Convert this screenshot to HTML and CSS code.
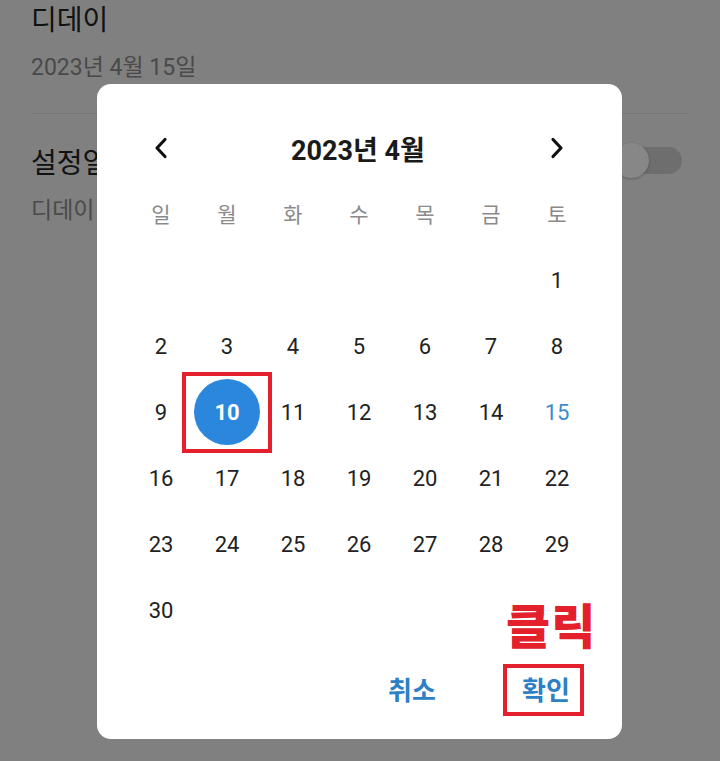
FILE: index.html
```html
<!DOCTYPE html>
<html lang="ko">
<head>
    <meta charset="UTF-8">
    <meta name="viewport" content="width=device-width, initial-scale=1.0">
    <title>디데이 설정</title>
    <link rel="stylesheet" href="styles.css">
</head>
<body>
    <!-- Settings list behind the dialog -->
    <div class="settings">
        <div class="item">
            <div class="itemText">
                <h3>디데이</h3>
                <p>2023년 4월 15일</p>
            </div>
        </div>
        <div class="item">
            <div class="itemText">
                <h3>설정일을 1일로</h3>
                <p>디데이 시작일을 1일로 계산합니다</p>
            </div>
            <div class="switch"><span class="thumb"></span></div>
        </div>
    </div>

    <div class="overlay">
        <div class="dialog">
            <div class="calHeader">
                <button class="navBtn" aria-label="이전 달">
                    <svg width="14" height="22" viewBox="0 0 14 22"><path d="M11 2.5 L3 11 L11 19.5" fill="none" stroke="#111" stroke-width="3.2" stroke-linecap="round" stroke-linejoin="round"/></svg>
                </button>
                <h2>2023년 4월</h2>
                <button class="navBtn" aria-label="다음 달">
                    <svg width="14" height="22" viewBox="0 0 14 22"><path d="M3 2.5 L11 11 L3 19.5" fill="none" stroke="#111" stroke-width="3.2" stroke-linecap="round" stroke-linejoin="round"/></svg>
                </button>
            </div>

            <div class="weekdays">
                <span>일</span><span>월</span><span>화</span><span>수</span><span>목</span><span>금</span><span>토</span>
            </div>

            <div class="days">
                <span></span><span></span><span></span><span></span><span></span><span></span><span>1</span>
                <span>2</span><span>3</span><span>4</span><span>5</span><span>6</span><span>7</span><span>8</span>
                <span>9</span><span class="selected"><b>10</b><i class="mark"></i></span><span>11</span><span>12</span><span>13</span><span>14</span><span class="today">15</span>
                <span>16</span><span>17</span><span>18</span><span>19</span><span>20</span><span>21</span><span>22</span>
                <span>23</span><span>24</span><span>25</span><span>26</span><span>27</span><span>28</span><span>29</span>
                <span>30</span>
            </div>

            <div class="actions">
                <button class="textBtn">취소</button>
                <button class="textBtn okBtn">확인<i class="mark"></i><em class="note">클릭</em></button>
            </div>
        </div>
    </div>
</body>
</html>
```

FILE: styles.css
```css
/* Reset */
*, *:before, *:after {
    box-sizing: border-box;
}
html, body, h2, h3, p {
    margin: 0;
    padding: 0;
}
body {
    width: 720px;
    height: 761px;
    overflow: hidden;
    background-color: #f2f2f2;
    font-family: Roboto, "Noto Sans CJK KR", sans-serif;
    color: #222;
}
button {
    border: none;
    background: none;
    padding: 0;
    font: inherit;
    cursor: pointer;
}

/* Settings list */
.settings {
    padding: 3px 31px 0 31px;
}
.item {
    display: flex;
    align-items: center;
    justify-content: space-between;
    border-bottom: 1px solid #dedede;
    padding-bottom: 31px;
}
.item + .item {
    border-bottom: none;
    padding-top: 32px;
}
.itemText h3 {
    font-size: 28px;
    font-weight: 400;
    line-height: 36px;
    color: #222;
}
.itemText p {
    margin-top: 15px;
    font-size: 23px;
    line-height: 28px;
    color: #8c8c8c;
}
.switch {
    position: relative;
    width: 62px;
    height: 27px;
    border-radius: 14px;
    background-color: #d0d0d0;
    margin-right: 7px;
    margin-top: -50px;
}
.thumb {
    position: absolute;
    left: -6px;
    top: -4px;
    width: 35px;
    height: 35px;
    border-radius: 50%;
    background-color: #fff;
    box-shadow: 0 1px 3px rgba(0,0,0,0.25);
}

/* Dialog */
.overlay {
    position: fixed;
    inset: 0;
    background-color: rgba(0,0,0,0.47);
    display: flex;
    justify-content: center;
    align-items: flex-start;
    padding: 84px 1px 0 0;
}
.dialog {
    position: relative;
    width: 525px;
    height: 655px;
    background-color: #fff;
    border-radius: 14px;
    padding: 40px 32px 0 31px;
}
.calHeader {
    display: flex;
    align-items: center;
    justify-content: space-between;
    height: 48px;
    margin-bottom: 8px;
}
.navBtn {
    width: 66px;
    height: 48px;
    display: flex;
    align-items: center;
    justify-content: center;
}
.calHeader h2 {
    font-size: 27px;
    font-weight: 700;
    color: #1a1a1a;
    margin-right: 2px;
}
.weekdays, .days {
    display: grid;
    grid-template-columns: repeat(7, 66px);
    grid-auto-rows: 66px;
}
.days {
    margin-top: 1px;
}
.weekdays span {
    display: flex;
    align-items: center;
    justify-content: center;
    font-size: 21px;
    color: #8a8a8a;
}
.days span {
    position: relative;
    display: flex;
    align-items: center;
    justify-content: center;
    font-size: 22px;
    color: #222;
}
.days .today {
    color: #3a8bd0;
}
.days .selected b {
    width: 66px;
    height: 66px;
    border-radius: 50%;
    background-color: #2b87dc;
    color: #fff;
    font-weight: 700;
    display: flex;
    align-items: center;
    justify-content: center;
}

/* Red annotation marks */
.mark {
    position: absolute;
    border: 4px solid #e3202b;
}
.selected .mark {
    left: -12px;
    top: -7px;
    width: 90px;
    height: 81px;
}

.actions {
    display: flex;
    justify-content: flex-end;
    gap: 34px;
    margin-top: 21px;
    margin-right: -6px;
}
.textBtn {
    position: relative;
    width: 100px;
    height: 48px;
    font-size: 26px;
    font-weight: 700;
    color: #2d7fc6;
}
.okBtn .mark {
    left: 7px;
    top: 0;
    width: 81px;
    height: 52px;
}
.note {
    position: absolute;
    left: 10px;
    top: -66px;
    font-style: normal;
    font-size: 48px;
    font-weight: 900;
    line-height: 60px;
    color: #e3202b;
    letter-spacing: 1px;
    white-space: nowrap;
}
```
